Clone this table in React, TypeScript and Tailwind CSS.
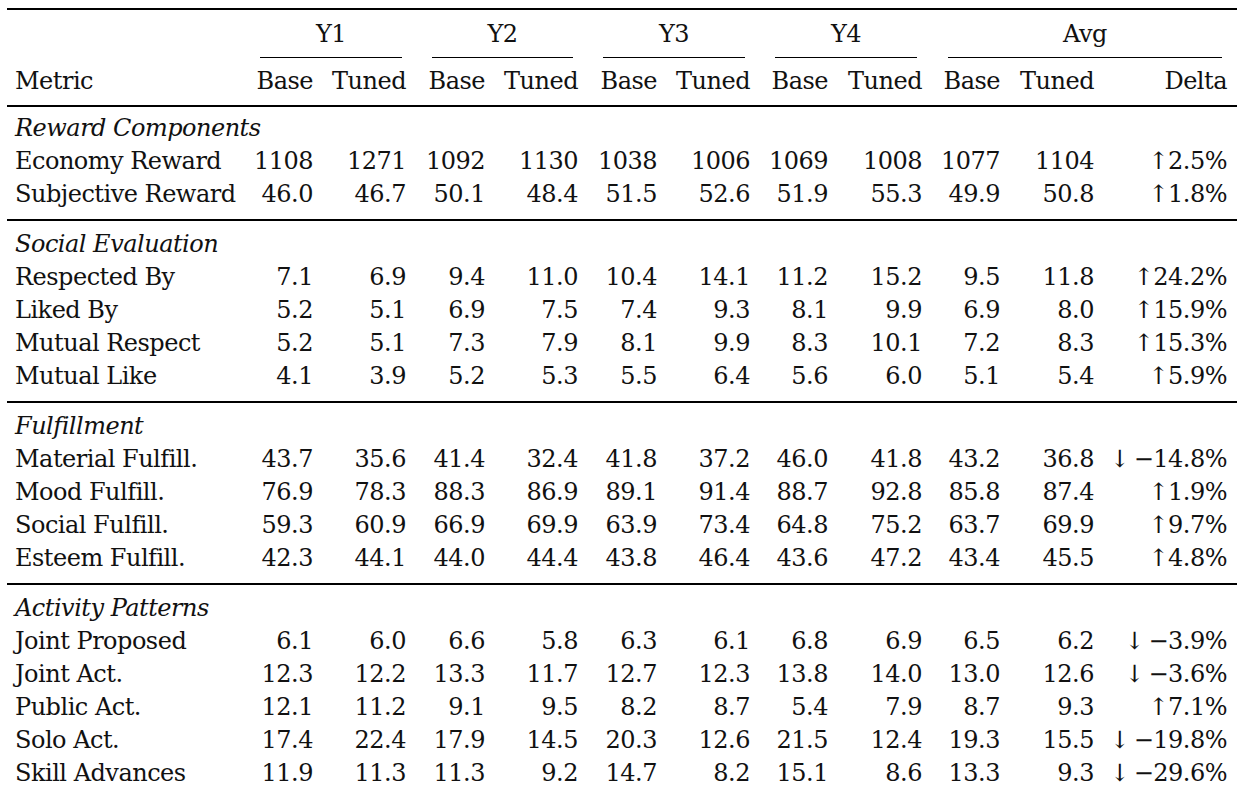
import React from "react";

type Row = { name: string; v: string[]; delta: string };
type Section = { title: string; rows: Row[] };

const sections: Section[] = [
  {
    title: "Reward Components",
    rows: [
      { name: "Economy Reward", v: ["1108", "1271", "1092", "1130", "1038", "1006", "1069", "1008", "1077", "1104"], delta: "↑2.5%" },
      { name: "Subjective Reward", v: ["46.0", "46.7", "50.1", "48.4", "51.5", "52.6", "51.9", "55.3", "49.9", "50.8"], delta: "↑1.8%" },
    ],
  },
  {
    title: "Social Evaluation",
    rows: [
      { name: "Respected By", v: ["7.1", "6.9", "9.4", "11.0", "10.4", "14.1", "11.2", "15.2", "9.5", "11.8"], delta: "↑24.2%" },
      { name: "Liked By", v: ["5.2", "5.1", "6.9", "7.5", "7.4", "9.3", "8.1", "9.9", "6.9", "8.0"], delta: "↑15.9%" },
      { name: "Mutual Respect", v: ["5.2", "5.1", "7.3", "7.9", "8.1", "9.9", "8.3", "10.1", "7.2", "8.3"], delta: "↑15.3%" },
      { name: "Mutual Like", v: ["4.1", "3.9", "5.2", "5.3", "5.5", "6.4", "5.6", "6.0", "5.1", "5.4"], delta: "↑5.9%" },
    ],
  },
  {
    title: "Fulfillment",
    rows: [
      { name: "Material Fulfill.", v: ["43.7", "35.6", "41.4", "32.4", "41.8", "37.2", "46.0", "41.8", "43.2", "36.8"], delta: "↓\u2009−14.8%" },
      { name: "Mood Fulfill.", v: ["76.9", "78.3", "88.3", "86.9", "89.1", "91.4", "88.7", "92.8", "85.8", "87.4"], delta: "↑1.9%" },
      { name: "Social Fulfill.", v: ["59.3", "60.9", "66.9", "69.9", "63.9", "73.4", "64.8", "75.2", "63.7", "69.9"], delta: "↑9.7%" },
      { name: "Esteem Fulfill.", v: ["42.3", "44.1", "44.0", "44.4", "43.8", "46.4", "43.6", "47.2", "43.4", "45.5"], delta: "↑4.8%" },
    ],
  },
  {
    title: "Activity Patterns",
    rows: [
      { name: "Joint Proposed", v: ["6.1", "6.0", "6.6", "5.8", "6.3", "6.1", "6.8", "6.9", "6.5", "6.2"], delta: "↓\u2009−3.9%" },
      { name: "Joint Act.", v: ["12.3", "12.2", "13.3", "11.7", "12.7", "12.3", "13.8", "14.0", "13.0", "12.6"], delta: "↓\u2009−3.6%" },
      { name: "Public Act.", v: ["12.1", "11.2", "9.1", "9.5", "8.2", "8.7", "5.4", "7.9", "8.7", "9.3"], delta: "↑7.1%" },
      { name: "Solo Act.", v: ["17.4", "22.4", "17.9", "14.5", "20.3", "12.6", "21.5", "12.4", "19.3", "15.5"], delta: "↓\u2009−19.8%" },
      { name: "Skill Advances", v: ["11.9", "11.3", "11.3", "9.2", "14.7", "8.2", "15.1", "8.6", "13.3", "9.3"], delta: "↓\u2009−29.6%" },
    ],
  },
];

const GRID =
  "grid grid-cols-[240px_66px_93px_79px_93px_79px_93px_78px_94px_78px_94px_133px]";

function Rule({ className }: { className: string }) {
  return <div className={`bg-black ${className}`} />;
}

function Group({ label, className }: { label: string; className: string }) {
  return (
    <div className={`flex flex-col items-center ${className}`}>
      <div className="h-[33px] leading-[33px]">{label}</div>
      <div className="mt-[5.5px] h-[1.3px] w-full bg-black" />
    </div>
  );
}

export default function App() {
  return (
    <div className="w-[1240px] h-[795px] overflow-hidden bg-white text-[#111] text-[24px] tracking-[-0.5px] font-['DejaVu_Serif',serif]">
      <div className="ml-[7px] w-[1230px] flex flex-col">
        <Rule className="mt-[8px] h-[2px]" />
        <div className={`${GRID} mt-[8px]`}>
          <div />
          <Group label="Y1" className="col-span-2 ml-[13px] mr-[4px]" />
          <Group label="Y2" className="col-span-2 ml-[26px] mr-[5px]" />
          <Group label="Y3" className="col-span-2 ml-[25px] mr-[5px]" />
          <Group label="Y4" className="col-span-2 ml-[25px] mr-[5px]" />
          <Group label="Avg" className="col-span-3 ml-[26px] mr-[5px]" />
        </div>
        <div className={`${GRID} mt-[7px] h-[33px] leading-[33px]`}>
          <div className="pl-[8px]">Metric</div>
          <div className="text-right">Base</div>
          <div className="text-right">Tuned</div>
          <div className="text-right">Base</div>
          <div className="text-right">Tuned</div>
          <div className="text-right">Base</div>
          <div className="text-right">Tuned</div>
          <div className="text-right">Base</div>
          <div className="text-right">Tuned</div>
          <div className="text-right">Base</div>
          <div className="text-right">Tuned</div>
          <div className="text-right">Delta</div>
        </div>
        <Rule className="mt-[7.5px] h-[1.5px]" />
        {sections.map((s, si) => (
          <div key={s.title} className="flex flex-col">
            {si > 0 && <Rule className="mt-[8.5px] mb-[7px] h-[1.5px]" />}
            <div className={`flex flex-col ${si === 0 ? "mt-[5px]" : ""}`}>
              <div className="h-[33px] leading-[33px] pl-[8px] italic">{s.title}</div>
              {s.rows.map((r) => (
                <div key={r.name} className={`${GRID} h-[33px] leading-[33px]`}>
                  <div className="pl-[8px] whitespace-nowrap">{r.name}</div>
                  {r.v.map((x, i) => (
                    <div key={i} className="text-right whitespace-nowrap">
                      {x}
                    </div>
                  ))}
                  <div className="text-right whitespace-nowrap">{r.delta}</div>
                </div>
              ))}
            </div>
          </div>
        ))}
      </div>
    </div>
  );
}
